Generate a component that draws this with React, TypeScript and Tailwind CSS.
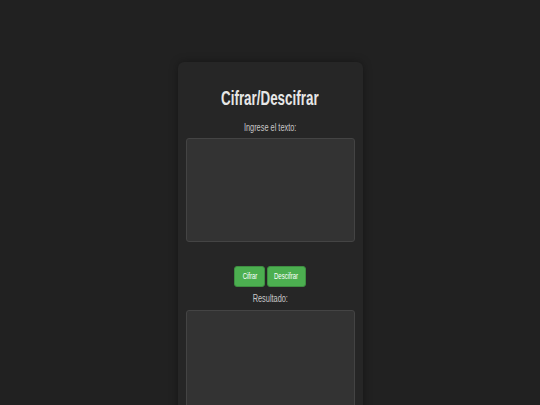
import { useState } from 'react';

export default function App() {
  const [texto, setTexto] = useState('');
  const [resultado, setResultado] = useState('');

  const cifrar = () => setResultado(texto.split('').map((c) => String.fromCharCode(c.charCodeAt(0) + 3)).join(''));
  const descifrar = () => setResultado(texto.split('').map((c) => String.fromCharCode(c.charCodeAt(0) - 3)).join(''));

  return (
    <div className="min-h-screen bg-[#212121] flex justify-center pt-[62px] font-['Liberation_Sans',Arial,sans-serif] overflow-hidden h-[405px]">
      <div className="w-[185px] bg-[#262626] rounded-md shadow-[0_0_8px_rgba(0,0,0,0.35)] px-2 pt-6 flex flex-col items-center self-start">
        {/* text in the shot is condensed */}
        <h1 className="text-[20px] leading-6 font-bold text-[#e6e6e6] whitespace-nowrap">
          <span className="inline-block scale-x-[0.67]">Cifrar/Descifrar</span>
        </h1>

        <label className="mt-[10px] text-[11px] leading-[14px] text-[#c8c8c8] whitespace-nowrap">
          <span className="inline-block scale-x-[0.67]">Ingrese el texto:</span>
        </label>
        <textarea
          value={texto}
          onChange={(e) => setTexto(e.target.value)}
          className="mt-1 w-full h-[104px] bg-[#333333] border border-[#444444] rounded-[3px] resize-none outline-none text-[11px] text-[#ddd] p-1"
        />

        <div className="mt-6 flex gap-[2px]">
          <button
            onClick={cifrar}
            className="w-[31px] h-[21px] flex items-center justify-center bg-[#4caf50] border border-[#3e8e41] rounded-[3px] text-[9px] text-white whitespace-nowrap"
          >
            <span className="inline-block scale-x-[0.67]">Cifrar</span>
          </button>
          <button
            onClick={descifrar}
            className="w-[39px] h-[21px] flex items-center justify-center bg-[#4caf50] border border-[#3e8e41] rounded-[3px] text-[9px] text-white whitespace-nowrap"
          >
            <span className="inline-block scale-x-[0.67]">Descifrar</span>
          </button>
        </div>

        <label className="mt-1 text-[11px] leading-[14px] text-[#c8c8c8] whitespace-nowrap">
          <span className="inline-block scale-x-[0.67]">Resultado:</span>
        </label>
        <textarea
          value={resultado}
          readOnly
          className="mt-[5px] w-full h-[104px] bg-[#333333] border border-[#444444] rounded-[3px] resize-none outline-none text-[11px] text-[#ddd] p-1"
        />
        <div className="h-6" />
      </div>
    </div>
  );
}
